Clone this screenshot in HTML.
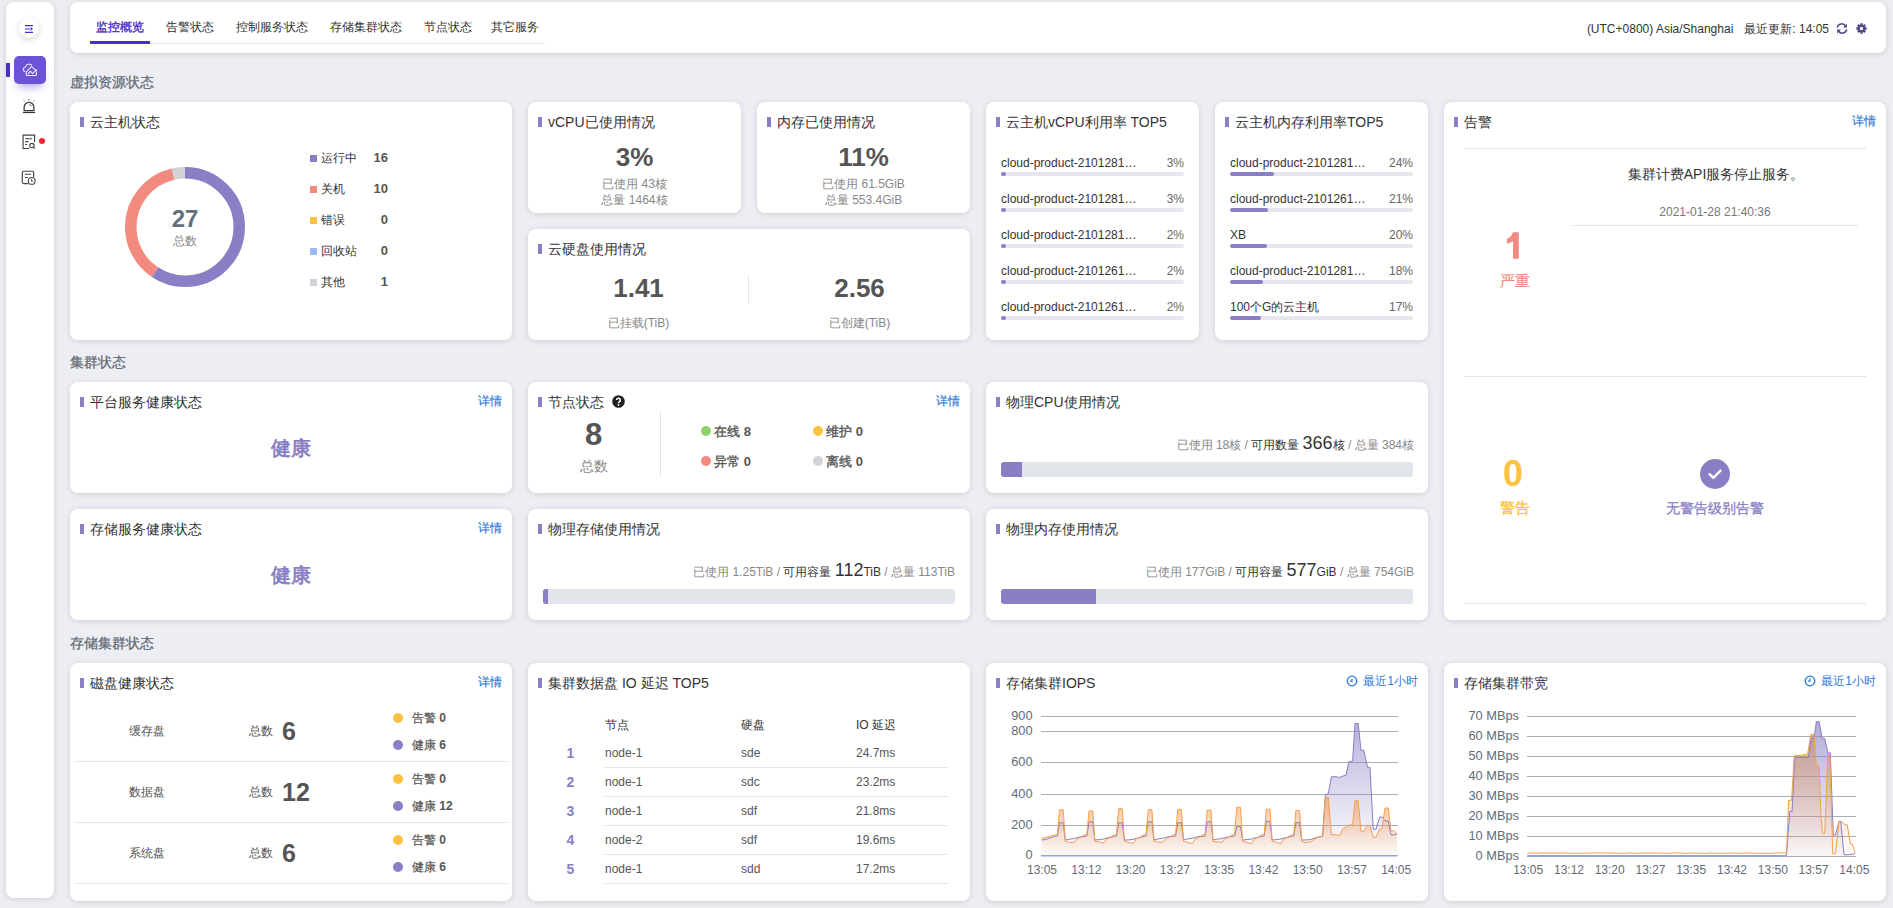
<!DOCTYPE html>
<html><head><meta charset="utf-8">
<style>
*{box-sizing:border-box;margin:0;padding:0}
html,body{width:1893px;height:908px;overflow:hidden}
body{background:#eceef3;font-family:"Liberation Sans",sans-serif;color:#333;position:relative}
.abs{position:absolute;white-space:nowrap}
.card{position:absolute;background:#fff;border-radius:8px;box-shadow:0 1px 6px rgba(0,0,0,0.13)}
.card>*{position:absolute;white-space:nowrap}
.ttl{left:20px;top:12px;font-size:14px;line-height:16px;color:#333}
.ttl:before{content:"";position:absolute;left:-10px;top:3px;width:4px;height:10px;background:#8a7fc4}
.sec{position:absolute;left:70px;font-size:14px;color:#5f6973;line-height:16px;-webkit-text-stroke:0.25px #5f6973}
.more{right:10px;top:12px;font-size:12px;color:#2d7bd8;line-height:14px;-webkit-text-stroke:0.2px #2d7bd8}
.tab{position:absolute;top:19px;font-size:12px;line-height:16px;color:#333;white-space:nowrap}
.c{transform:translateX(-50%);text-align:center}
.r{text-align:right}
.g{color:#888}
</style></head>
<body>
<div class="card" style="left:6px;top:2px;width:48px;height:896px"></div>
<div class="abs" style="left:19px;top:17.5px;width:20px;height:20px;border-radius:50%;background:#fff;box-shadow:0 2px 6px rgba(0,0,0,0.16)"></div>
<svg class="abs" style="left:19px;top:17.5px" width="20" height="20" viewBox="0 0 20 20"><path d="M6 7.6h8M6 14.4h8" stroke="#4b2ccc" stroke-width="1.4"/><path d="M6 11h5" stroke="#8a78dd" stroke-width="1.6"/><path d="M11.7 9.1l2.1 1.9-2.1 1.9z" fill="#4b2ccc"/></svg>
<div class="abs" style="left:14px;top:56px;width:32px;height:28px;border-radius:5px;background:#6d52d8;box-shadow:0 7px 9px -4px rgba(109,82,216,0.5)"></div>
<div class="abs" style="left:6px;top:63px;width:4px;height:14px;background:#4b2ccc"></div>
<svg class="abs" style="left:14px;top:56px" width="32" height="28" viewBox="0 0 32 28" fill="none" stroke="#fff" stroke-opacity="0.92" stroke-width="1.05" stroke-linecap="round" stroke-linejoin="round"><path d="M10.6 15.5C9.6 14.9 9.1 14 9.3 13.1C9.6 11.9 10.5 11.2 11.4 11.1C11.9 9.6 12.6 8.3 14 8.3H16.4C17 8.3 17.5 8.9 17.7 9.7"/><path d="M12.7 15.5L15.4 12.6C16.2 11.6 17 10.8 17.6 10.8C18.3 10.8 19 12 19.6 12.6L21.2 13.6"/><path d="M12.7 15.5C12.3 15.8 12.2 16.3 12.2 17V18.4C12.2 19 12.6 19.4 13.2 19.4H21.5C22.1 19.4 22.5 19 22.5 18.4V16.4"/><path d="M14.3 17.6L16.4 15.2L18.5 17.6L22 14.4"/><path d="M22.4 13.9l-1.6.2 1.3 1.2z" fill="#fff" stroke-width="0.6"/></svg>
<svg class="abs" style="left:22px;top:98px" width="14" height="16" viewBox="0 0 14 16" fill="none" stroke="#333" stroke-width="1.2"><path d="M2.1 12.6V9.2a4.9 4.9 0 0 1 9.8 0v3.4z"/><path d="M0.9 14.5h12.2" stroke-width="1.2"/><path d="M7 1.2v1.2M1.8 2.6l.8.9M12.2 2.6l-.8.9" stroke-width="1"/><path d="M7.6 6.6c.8.3 1.3.8 1.6 1.5" stroke-width="1"/></svg>
<svg class="abs" style="left:22px;top:134px" width="14" height="16" viewBox="0 0 14 16" fill="none" stroke="#444" stroke-width="1.15"><path d="M12.6 8.2V1.1H1.1v13.4h6.2"/><path d="M3.2 4.7h6.9M3.2 7.6h3.4M3.2 10.4h1.9" stroke-width="1.05"/><circle cx="9.9" cy="11.6" r="2.2" stroke-width="1.1"/><path d="M11.5 13.2l1.3 1.3" stroke-width="1.1"/></svg>
<div class="abs" style="left:39px;top:138px;width:6px;height:6px;border-radius:50%;background:#f5222d"></div>
<svg class="abs" style="left:21px;top:170px" width="16" height="16" viewBox="0 0 16 16" fill="none" stroke="#444" stroke-width="1.15"><path d="M7 13.6H2.8a1.5 1.5 0 0 1-1.5-1.5V2.7a1.5 1.5 0 0 1 1.5-1.5h8.4a1.5 1.5 0 0 1 1.5 1.5V7"/><path d="M3.8 4.3h6.2M3.8 7.4h3.1" stroke-width="1.05"/><circle cx="10.7" cy="10.9" r="3.4" fill="#fff" stroke-width="1.1"/><path d="M10.5 9.2v1.9h1.5" stroke-width="1"/></svg>
<div class="card" style="left:70px;top:2px;width:1816px;height:51px"></div>
<div class="abs" style="left:90px;top:43px;width:455px;height:1px;background:#e6e6ef"></div>
<div class="tab" style="left:96px;color:#4b2ccc;-webkit-text-stroke:0.35px #4b2ccc">监控概览</div>
<div class="abs" style="left:90px;top:41px;width:60px;height:3px;background:#4b2ccc"></div>
<div class="tab" style="left:166px">告警状态</div>
<div class="tab" style="left:236px">控制服务状态</div>
<div class="tab" style="left:330px">存储集群状态</div>
<div class="tab" style="left:424px">节点状态</div>
<div class="tab" style="left:491px">其它服务</div>
<div class="abs" style="right:64px;top:21px;font-size:12px;line-height:16px;color:#333">(UTC+0800) Asia/Shanghai<span style="margin-left:11px">最近更新: 14:05</span></div>
<svg class="abs" style="left:1836px;top:23px" width="12" height="11" viewBox="0 0 12 11" fill="none" stroke="#524a86" stroke-width="1.5"><path d="M1.2 4.6A4.6 4.6 0 0 1 9.6 3"/><path d="M10.8 6.4A4.6 4.6 0 0 1 2.4 8"/><path d="M10.9 0.6v3.9H7z" fill="#524a86" stroke="none"/><path d="M1.1 10.4V6.5H5z" fill="#524a86" stroke="none"/></svg>
<svg class="abs" style="left:1855.5px;top:23px" width="11" height="11" viewBox="0 0 24 24"><path fill="#524a86" fill-rule="evenodd" d="M8.71,4.05 L9.49,3.78 L9.39,0.70 L14.61,0.70 L14.51,3.78 L15.29,4.05 L16.04,4.41 L18.15,2.16 L21.84,5.85 L19.59,7.96 L19.95,8.71 L20.22,9.49 L23.30,9.39 L23.30,14.61 L20.22,14.51 L19.95,15.29 L19.59,16.04 L21.84,18.15 L18.15,21.84 L16.04,19.59 L15.29,19.95 L14.51,20.22 L14.61,23.30 L9.39,23.30 L9.49,20.22 L8.71,19.95 L7.96,19.59 L5.85,21.84 L2.16,18.15 L4.41,16.04 L4.05,15.29 L3.78,14.51 L0.70,14.61 L0.70,9.39 L3.78,9.49 L4.05,8.71 L4.41,7.96 L2.16,5.85 L5.85,2.16 L7.96,4.41 Z M12,8.4 A3.6,3.6 0 1,0 12,15.6 A3.6,3.6 0 1,0 12,8.4 Z"/></svg>
<div class="sec" style="top:74px">虚拟资源状态</div>
<div class="sec" style="top:354px">集群状态</div>
<div class="sec" style="top:635px">存储集群状态</div>
<div class="card" style="left:70px;top:102px;width:442px;height:238px"><div class="ttl">云主机状态</div><svg style="left:0;top:0" width="240" height="238"><circle cx="115" cy="125" r="54.25" fill="none" stroke="#8a7fc4" stroke-width="11.5" stroke-dasharray="201.993 138.870" stroke-dashoffset="0.000" transform="rotate(-90 115 125)"/><circle cx="115" cy="125" r="54.25" fill="none" stroke="#f28a80" stroke-width="11.5" stroke-dasharray="126.245 214.617" stroke-dashoffset="-201.993" transform="rotate(-90 115 125)"/><circle cx="115" cy="125" r="54.25" fill="none" stroke="#d2d2d8" stroke-width="11.5" stroke-dasharray="12.625 328.238" stroke-dashoffset="-328.238" transform="rotate(-90 115 125)"/></svg><div class="c" style="left:115px;top:103px;font-size:24px;line-height:28px;font-weight:bold;color:#62707b">27</div><div class="c g" style="left:115px;top:132px;font-size:12px;line-height:14px">总数</div><div style="left:240px;top:52.5px;width:7px;height:7px;background:#8a7fc4"></div><div style="left:251px;top:47.5px;font-size:12px;line-height:16px;color:#333">运行中</div><div class="r" style="left:278px;width:40px;top:46.5px;font-size:13px;line-height:18px;font-weight:bold;color:#555">16</div><div style="left:240px;top:83.5px;width:7px;height:7px;background:#f28a80"></div><div style="left:251px;top:78.5px;font-size:12px;line-height:16px;color:#333">关机</div><div class="r" style="left:278px;width:40px;top:77.5px;font-size:13px;line-height:18px;font-weight:bold;color:#555">10</div><div style="left:240px;top:114.5px;width:7px;height:7px;background:#fcc23f"></div><div style="left:251px;top:109.5px;font-size:12px;line-height:16px;color:#333">错误</div><div class="r" style="left:278px;width:40px;top:108.5px;font-size:13px;line-height:18px;font-weight:bold;color:#555">0</div><div style="left:240px;top:145.5px;width:7px;height:7px;background:#9db8f5"></div><div style="left:251px;top:140.5px;font-size:12px;line-height:16px;color:#333">回收站</div><div class="r" style="left:278px;width:40px;top:139.5px;font-size:13px;line-height:18px;font-weight:bold;color:#555">0</div><div style="left:240px;top:176.5px;width:7px;height:7px;background:#d2d2d8"></div><div style="left:251px;top:171.5px;font-size:12px;line-height:16px;color:#333">其他</div><div class="r" style="left:278px;width:40px;top:170.5px;font-size:13px;line-height:18px;font-weight:bold;color:#555">1</div></div>
<div class="card" style="left:528px;top:102px;width:213px;height:111px"><div class="ttl">vCPU已使用情况</div><div class="c" style="left:106.5px;top:40px;font-size:26px;line-height:30px;font-weight:bold;color:#555">3%</div><div class="c g" style="left:106.5px;top:74px;font-size:12px;line-height:16px">已使用 43核</div><div class="c g" style="left:106.5px;top:90px;font-size:12px;line-height:16px">总量 1464核</div></div>
<div class="card" style="left:757px;top:102px;width:213px;height:111px"><div class="ttl">内存已使用情况</div><div class="c" style="left:106.5px;top:40px;font-size:26px;line-height:30px;font-weight:bold;color:#555">11%</div><div class="c g" style="left:106.5px;top:74px;font-size:12px;line-height:16px">已使用 61.5GiB</div><div class="c g" style="left:106.5px;top:90px;font-size:12px;line-height:16px">总量 553.4GiB</div></div>
<div class="card" style="left:528px;top:229px;width:442px;height:111px"><div class="ttl">云硬盘使用情况</div><div class="c" style="left:110.5px;top:44px;font-size:26px;line-height:30px;font-weight:bold;color:#555">1.41</div><div class="c g" style="left:110.5px;top:86px;font-size:12px;line-height:16px">已挂载(TiB)</div><div class="c" style="left:331.5px;top:44px;font-size:26px;line-height:30px;font-weight:bold;color:#555">2.56</div><div class="c g" style="left:331.5px;top:86px;font-size:12px;line-height:16px">已创建(TiB)</div><div style="left:220px;top:46px;width:1px;height:29px;background:#e8e8e8"></div></div>
<div class="card" style="left:986px;top:102px;width:213px;height:238px"><div class="ttl">云主机vCPU利用率 TOP5</div><div style="left:15px;top:53px;font-size:12px;line-height:16px;color:#333">cloud-product-2101281…</div><div class="r" style="right:15px;top:53px;font-size:12px;line-height:16px;color:#666">3%</div><div style="left:15px;top:70px;width:183px;height:4px;border-radius:2px;background:#e4e7eb"></div><div style="left:15px;top:70px;width:5px;height:4px;border-radius:2px;background:#8a7fc4"></div><div style="left:15px;top:89px;font-size:12px;line-height:16px;color:#333">cloud-product-2101281…</div><div class="r" style="right:15px;top:89px;font-size:12px;line-height:16px;color:#666">3%</div><div style="left:15px;top:106px;width:183px;height:4px;border-radius:2px;background:#e4e7eb"></div><div style="left:15px;top:106px;width:5px;height:4px;border-radius:2px;background:#8a7fc4"></div><div style="left:15px;top:125px;font-size:12px;line-height:16px;color:#333">cloud-product-2101281…</div><div class="r" style="right:15px;top:125px;font-size:12px;line-height:16px;color:#666">2%</div><div style="left:15px;top:142px;width:183px;height:4px;border-radius:2px;background:#e4e7eb"></div><div style="left:15px;top:142px;width:5px;height:4px;border-radius:2px;background:#8a7fc4"></div><div style="left:15px;top:161px;font-size:12px;line-height:16px;color:#333">cloud-product-2101261…</div><div class="r" style="right:15px;top:161px;font-size:12px;line-height:16px;color:#666">2%</div><div style="left:15px;top:178px;width:183px;height:4px;border-radius:2px;background:#e4e7eb"></div><div style="left:15px;top:178px;width:5px;height:4px;border-radius:2px;background:#8a7fc4"></div><div style="left:15px;top:197px;font-size:12px;line-height:16px;color:#333">cloud-product-2101261…</div><div class="r" style="right:15px;top:197px;font-size:12px;line-height:16px;color:#666">2%</div><div style="left:15px;top:214px;width:183px;height:4px;border-radius:2px;background:#e4e7eb"></div><div style="left:15px;top:214px;width:5px;height:4px;border-radius:2px;background:#8a7fc4"></div></div>
<div class="card" style="left:1215px;top:102px;width:213px;height:238px"><div class="ttl">云主机内存利用率TOP5</div><div style="left:15px;top:53px;font-size:12px;line-height:16px;color:#333">cloud-product-2101281…</div><div class="r" style="right:15px;top:53px;font-size:12px;line-height:16px;color:#666">24%</div><div style="left:15px;top:70px;width:183px;height:4px;border-radius:2px;background:#e4e7eb"></div><div style="left:15px;top:70px;width:44px;height:4px;border-radius:2px;background:#8a7fc4"></div><div style="left:15px;top:89px;font-size:12px;line-height:16px;color:#333">cloud-product-2101261…</div><div class="r" style="right:15px;top:89px;font-size:12px;line-height:16px;color:#666">21%</div><div style="left:15px;top:106px;width:183px;height:4px;border-radius:2px;background:#e4e7eb"></div><div style="left:15px;top:106px;width:38px;height:4px;border-radius:2px;background:#8a7fc4"></div><div style="left:15px;top:125px;font-size:12px;line-height:16px;color:#333">XB</div><div class="r" style="right:15px;top:125px;font-size:12px;line-height:16px;color:#666">20%</div><div style="left:15px;top:142px;width:183px;height:4px;border-radius:2px;background:#e4e7eb"></div><div style="left:15px;top:142px;width:37px;height:4px;border-radius:2px;background:#8a7fc4"></div><div style="left:15px;top:161px;font-size:12px;line-height:16px;color:#333">cloud-product-2101281…</div><div class="r" style="right:15px;top:161px;font-size:12px;line-height:16px;color:#666">18%</div><div style="left:15px;top:178px;width:183px;height:4px;border-radius:2px;background:#e4e7eb"></div><div style="left:15px;top:178px;width:33px;height:4px;border-radius:2px;background:#8a7fc4"></div><div style="left:15px;top:197px;font-size:12px;line-height:16px;color:#333">100个G的云主机</div><div class="r" style="right:15px;top:197px;font-size:12px;line-height:16px;color:#666">17%</div><div style="left:15px;top:214px;width:183px;height:4px;border-radius:2px;background:#e4e7eb"></div><div style="left:15px;top:214px;width:31px;height:4px;border-radius:2px;background:#8a7fc4"></div></div>
<div class="card" style="left:1444px;top:102px;width:442px;height:518px"><div class="ttl">告警</div><div class="more">详情</div><div style="left:20px;top:46px;width:402px;height:1px;background:#e3e3e3"></div><div class="c" style="left:272px;top:64px;font-size:14px;line-height:16px;color:#333">集群计费API服务停止服务。</div><div class="c" style="left:271px;top:102px;font-size:12px;line-height:16px;color:#777">2021-01-28 21:40:36</div><div style="left:129px;top:123px;width:285px;height:1px;background:#e3e3e3"></div><svg style="left:0;top:0" width="100" height="170"><path fill="#f28a80" d="M69 130.3H74.8V156.8H69V139.3C67.2 140.4 65 141.3 62.9 141.8V136.8C65.8 135.8 68.2 133.6 69 130.3Z"/></svg><div class="c" style="left:70.5px;top:170px;font-size:15px;line-height:18px;color:#f28a80;-webkit-text-stroke:0.2px #f28a80">严重</div><div style="left:20px;top:274px;width:402px;height:1px;background:#e3e3e3"></div><div class="c" style="left:69px;top:352px;font-size:36px;line-height:40px;font-weight:bold;color:#fcc23f">0</div><div class="c" style="left:70.5px;top:397px;font-size:15px;line-height:18px;color:#fcc23f;-webkit-text-stroke:0.3px #fcc23f">警告</div><svg style="left:256px;top:357px" width="30" height="30" viewBox="0 0 30 30"><circle cx="15" cy="15" r="15" fill="#8a7fc4"/><path d="M9.5 15.2l3.8 3.6 7.2-7.2" fill="none" stroke="#fff" stroke-width="2.4" stroke-linecap="round" stroke-linejoin="round"/></svg><div class="c" style="left:271px;top:398px;font-size:14px;line-height:16px;color:#8a7fc4;-webkit-text-stroke:0.3px #8a7fc4">无警告级别告警</div><div style="left:20px;top:501px;width:402px;height:1px;background:#e3e3e3"></div></div>
<div class="card" style="left:70px;top:382px;width:442px;height:111px"><div class="ttl">平台服务健康状态</div><div class="more">详情</div><div class="c" style="left:221px;top:54px;font-size:20px;line-height:24px;font-weight:bold;color:#8a7fc4">健康</div></div>
<div class="card" style="left:70px;top:509px;width:442px;height:111px"><div class="ttl">存储服务健康状态</div><div class="more">详情</div><div class="c" style="left:221px;top:54px;font-size:20px;line-height:24px;font-weight:bold;color:#8a7fc4">健康</div></div>
<div class="card" style="left:528px;top:382px;width:442px;height:111px"><div class="ttl">节点状态</div><div class="more">详情</div><svg style="left:84px;top:13px" width="13" height="13" viewBox="0 0 13 13"><circle cx="6.5" cy="6.5" r="6.3" fill="#222"/><path d="M4.6 5.1a1.9 1.9 0 1 1 2.6 1.8c-.5.2-.7.5-.7 1v.4" fill="none" stroke="#fff" stroke-width="1.5"/><circle cx="6.5" cy="10" r=".9" fill="#fff"/></svg><div class="c" style="left:65.5px;top:37px;font-size:31px;line-height:32px;font-weight:bold;color:#555">8</div><div class="c g" style="left:65.5px;top:76px;font-size:14px;line-height:16px">总数</div><div style="left:132px;top:30px;width:1px;height:65px;background:#e3e3e3"></div><div style="left:173px;top:44px;width:10px;height:10px;border-radius:50%;background:#8fd16a"></div><div style="left:186px;top:42px;font-size:13px;line-height:16px;color:#555"><span style="-webkit-text-stroke:0.35px #555">在线</span> <b>8</b></div><div style="left:285px;top:44px;width:10px;height:10px;border-radius:50%;background:#fcc23f"></div><div style="left:298px;top:42px;font-size:13px;line-height:16px;color:#555"><span style="-webkit-text-stroke:0.35px #555">维护</span> <b>0</b></div><div style="left:173px;top:74px;width:10px;height:10px;border-radius:50%;background:#f28a80"></div><div style="left:186px;top:72px;font-size:13px;line-height:16px;color:#555"><span style="-webkit-text-stroke:0.35px #555">异常</span> <b>0</b></div><div style="left:285px;top:74px;width:10px;height:10px;border-radius:50%;background:#d2d2d8"></div><div style="left:298px;top:72px;font-size:13px;line-height:16px;color:#555"><span style="-webkit-text-stroke:0.35px #555">离线</span> <b>0</b></div></div>
<div class="card" style="left:986px;top:382px;width:442px;height:111px"><div class="ttl">物理CPU使用情况</div><div class="r" style="right:14px;top:49px;font-size:12px;line-height:24px;color:#888">已使用 18核 / <span style="color:#333">可用数量 <span style="font-size:18px">366</span>核</span> / 总量 384核</div><div style="left:15px;top:80px;width:412px;height:15px;border-radius:3px;background:#e2e5e9;overflow:hidden"><div style="position:absolute;left:0;top:0;height:15px;width:21px;background:#8a7fc4"></div></div></div>
<div class="card" style="left:528px;top:509px;width:442px;height:111px"><div class="ttl">物理存储使用情况</div><div class="r" style="right:15px;top:49px;font-size:12px;line-height:24px;color:#888">已使用 1.25TiB / <span style="color:#333">可用容量 <span style="font-size:18px">112</span>TiB</span> / 总量 113TiB</div><div style="left:15px;top:80px;width:412px;height:15px;border-radius:3px;background:#e2e5e9;overflow:hidden"><div style="position:absolute;left:0;top:0;height:15px;width:5px;background:#8a7fc4"></div></div></div>
<div class="card" style="left:986px;top:509px;width:442px;height:111px"><div class="ttl">物理内存使用情况</div><div class="r" style="right:14px;top:49px;font-size:12px;line-height:24px;color:#888">已使用 177GiB / <span style="color:#333">可用容量 <span style="font-size:18px">577</span>GiB</span> / 总量 754GiB</div><div style="left:15px;top:80px;width:412px;height:15px;border-radius:3px;background:#e2e5e9;overflow:hidden"><div style="position:absolute;left:0;top:0;height:15px;width:95px;background:#8a7fc4"></div></div></div>
<div class="card" style="left:70px;top:663px;width:442px;height:238px"><div class="ttl">磁盘健康状态</div><div class="more">详情</div><div class="c" style="left:77px;top:60px;font-size:12px;line-height:16px;color:#555">缓存盘</div><div style="left:179px;top:60px;font-size:12px;line-height:16px;color:#555">总数</div><div style="left:212px;top:53px;font-size:25px;line-height:30px;font-weight:bold;color:#555">6</div><div style="left:323px;top:50px;width:10px;height:10px;border-radius:50%;background:#fcc23f"></div><div style="left:342px;top:47px;font-size:12px;line-height:16px;color:#555"><span style="-webkit-text-stroke:0.2px #555">告警</span> <b>0</b></div><div style="left:323px;top:77px;width:10px;height:10px;border-radius:50%;background:#8a7fc4"></div><div style="left:342px;top:74px;font-size:12px;line-height:16px;color:#555"><span style="-webkit-text-stroke:0.2px #555">健康</span> <b>6</b></div><div style="left:5px;top:98px;width:432px;height:1px;background:#e3e3e3"></div><div class="c" style="left:77px;top:121px;font-size:12px;line-height:16px;color:#555">数据盘</div><div style="left:179px;top:121px;font-size:12px;line-height:16px;color:#555">总数</div><div style="left:212px;top:114px;font-size:25px;line-height:30px;font-weight:bold;color:#555">12</div><div style="left:323px;top:111px;width:10px;height:10px;border-radius:50%;background:#fcc23f"></div><div style="left:342px;top:108px;font-size:12px;line-height:16px;color:#555"><span style="-webkit-text-stroke:0.2px #555">告警</span> <b>0</b></div><div style="left:323px;top:138px;width:10px;height:10px;border-radius:50%;background:#8a7fc4"></div><div style="left:342px;top:135px;font-size:12px;line-height:16px;color:#555"><span style="-webkit-text-stroke:0.2px #555">健康</span> <b>12</b></div><div style="left:5px;top:159px;width:432px;height:1px;background:#e3e3e3"></div><div class="c" style="left:77px;top:182px;font-size:12px;line-height:16px;color:#555">系统盘</div><div style="left:179px;top:182px;font-size:12px;line-height:16px;color:#555">总数</div><div style="left:212px;top:175px;font-size:25px;line-height:30px;font-weight:bold;color:#555">6</div><div style="left:323px;top:172px;width:10px;height:10px;border-radius:50%;background:#fcc23f"></div><div style="left:342px;top:169px;font-size:12px;line-height:16px;color:#555"><span style="-webkit-text-stroke:0.2px #555">告警</span> <b>0</b></div><div style="left:323px;top:199px;width:10px;height:10px;border-radius:50%;background:#8a7fc4"></div><div style="left:342px;top:196px;font-size:12px;line-height:16px;color:#555"><span style="-webkit-text-stroke:0.2px #555">健康</span> <b>6</b></div><div style="left:5px;top:220px;width:432px;height:1px;background:#e3e3e3"></div></div>
<div class="card" style="left:528px;top:663px;width:442px;height:238px"><div class="ttl">集群数据盘 IO 延迟 TOP5</div><div style="left:77px;top:54px;font-size:12px;line-height:16px;color:#333">节点</div><div style="left:213px;top:54px;font-size:12px;line-height:16px;color:#333">硬盘</div><div style="left:328px;top:54px;font-size:12px;line-height:16px;color:#333">IO 延迟</div><div class="c" style="left:42.5px;top:81px;font-size:14px;line-height:18px;font-weight:bold;color:#8a7fc4">1</div><div style="left:77px;top:82px;font-size:12px;line-height:16px;color:#555">node-1</div><div style="left:213px;top:82px;font-size:12px;line-height:16px;color:#555">sde</div><div style="left:328px;top:82px;font-size:12px;line-height:16px;color:#555">24.7ms</div><div style="left:77px;top:104px;width:343px;height:1px;background:#e3e3e3"></div><div class="c" style="left:42.5px;top:110px;font-size:14px;line-height:18px;font-weight:bold;color:#8a7fc4">2</div><div style="left:77px;top:111px;font-size:12px;line-height:16px;color:#555">node-1</div><div style="left:213px;top:111px;font-size:12px;line-height:16px;color:#555">sdc</div><div style="left:328px;top:111px;font-size:12px;line-height:16px;color:#555">23.2ms</div><div style="left:77px;top:133px;width:343px;height:1px;background:#e3e3e3"></div><div class="c" style="left:42.5px;top:139px;font-size:14px;line-height:18px;font-weight:bold;color:#8a7fc4">3</div><div style="left:77px;top:140px;font-size:12px;line-height:16px;color:#555">node-1</div><div style="left:213px;top:140px;font-size:12px;line-height:16px;color:#555">sdf</div><div style="left:328px;top:140px;font-size:12px;line-height:16px;color:#555">21.8ms</div><div style="left:77px;top:162px;width:343px;height:1px;background:#e3e3e3"></div><div class="c" style="left:42.5px;top:168px;font-size:14px;line-height:18px;font-weight:bold;color:#8a7fc4">4</div><div style="left:77px;top:169px;font-size:12px;line-height:16px;color:#555">node-2</div><div style="left:213px;top:169px;font-size:12px;line-height:16px;color:#555">sdf</div><div style="left:328px;top:169px;font-size:12px;line-height:16px;color:#555">19.6ms</div><div style="left:77px;top:191px;width:343px;height:1px;background:#e3e3e3"></div><div class="c" style="left:42.5px;top:197px;font-size:14px;line-height:18px;font-weight:bold;color:#8a7fc4">5</div><div style="left:77px;top:198px;font-size:12px;line-height:16px;color:#555">node-1</div><div style="left:213px;top:198px;font-size:12px;line-height:16px;color:#555">sdd</div><div style="left:328px;top:198px;font-size:12px;line-height:16px;color:#555">17.2ms</div><div style="left:77px;top:220px;width:343px;height:1px;background:#e3e3e3"></div></div>
<div class="card" style="left:986px;top:663px;width:442px;height:238px"><div class="ttl">存储集群IOPS</div><svg style="left:0;top:0" width="442" height="238" viewBox="986 663 442 238" font-family="Liberation Sans, sans-serif" font-size="12"><defs><linearGradient id="gp1" x1="0" y1="0" x2="0" y2="1"><stop offset="0" stop-color="#8a7fc4" stop-opacity="0.6"/><stop offset="1" stop-color="#8a7fc4" stop-opacity="0"/></linearGradient><linearGradient id="go1" x1="0" y1="0" x2="0" y2="1"><stop offset="0" stop-color="#f79a50" stop-opacity="0.62"/><stop offset="1" stop-color="#f79a50" stop-opacity="0.03"/></linearGradient></defs><line x1="1041" x2="1398" y1="855.5" y2="855.5" stroke="#a9afb9" stroke-width="1"/><text x="1032.6" y="858.8" text-anchor="end" fill="#636b75" font-size="12.8">0</text><line x1="1041" x2="1398" y1="825.5" y2="825.5" stroke="#a9afb9" stroke-width="1"/><text x="1032.6" y="828.8" text-anchor="end" fill="#636b75" font-size="12.8">200</text><line x1="1041" x2="1398" y1="794.5" y2="794.5" stroke="#a9afb9" stroke-width="1"/><text x="1032.6" y="797.8" text-anchor="end" fill="#636b75" font-size="12.8">400</text><line x1="1041" x2="1398" y1="762.5" y2="762.5" stroke="#a9afb9" stroke-width="1"/><text x="1032.6" y="765.8" text-anchor="end" fill="#636b75" font-size="12.8">600</text><line x1="1041" x2="1398" y1="731.5" y2="731.5" stroke="#a9afb9" stroke-width="1"/><text x="1032.6" y="734.8" text-anchor="end" fill="#636b75" font-size="12.8">800</text><line x1="1041" x2="1398" y1="716.5" y2="716.5" stroke="#a9afb9" stroke-width="1"/><text x="1032.6" y="719.8" text-anchor="end" fill="#636b75" font-size="12.8">900</text><text x="1042.0" y="873.8" text-anchor="middle" fill="#636b75">13:05</text><text x="1086.3" y="873.8" text-anchor="middle" fill="#636b75">13:12</text><text x="1130.5" y="873.8" text-anchor="middle" fill="#636b75">13:20</text><text x="1174.8" y="873.8" text-anchor="middle" fill="#636b75">13:27</text><text x="1219.1" y="873.8" text-anchor="middle" fill="#636b75">13:35</text><text x="1263.4" y="873.8" text-anchor="middle" fill="#636b75">13:42</text><text x="1307.7" y="873.8" text-anchor="middle" fill="#636b75">13:50</text><text x="1351.9" y="873.8" text-anchor="middle" fill="#636b75">13:57</text><text x="1396.2" y="873.8" text-anchor="middle" fill="#636b75">14:05</text><path d="M1041.5,855.7 L1041.5,840.0 L1045.0,839.6 L1054.3,836.5 L1057.0,836.0 L1057.4,835.9 L1059.5,822.7 L1063.2,822.7 L1065.3,840.0 L1069.8,839.1 L1074.3,838.5 L1077.1,837.6 L1080.8,836.8 L1083.8,836.5 L1086.5,836.0 L1086.9,835.9 L1089.0,821.8 L1092.8,821.8 L1094.8,840.0 L1099.4,839.6 L1103.9,839.0 L1106.7,838.0 L1110.4,837.3 L1113.4,836.5 L1116.1,836.0 L1116.5,835.9 L1118.6,822.7 L1122.3,822.7 L1124.4,840.0 L1129.0,839.9 L1133.5,839.3 L1136.2,838.3 L1140.0,837.6 L1143.0,836.5 L1145.7,836.0 L1146.0,835.9 L1148.2,821.8 L1151.9,821.8 L1154.0,840.0 L1158.5,838.8 L1163.0,838.2 L1165.8,837.3 L1169.5,836.5 L1172.5,836.5 L1175.2,836.0 L1175.6,835.9 L1177.7,822.7 L1181.4,822.7 L1183.5,840.0 L1188.0,838.8 L1192.5,838.2 L1195.3,837.3 L1199.0,836.5 L1202.0,836.5 L1204.8,836.0 L1205.1,835.9 L1207.2,821.8 L1211.0,821.8 L1213.0,840.0 L1217.6,839.1 L1222.1,838.5 L1224.9,837.6 L1228.6,836.8 L1231.6,836.5 L1234.3,836.0 L1234.7,835.9 L1236.8,826.4 L1240.5,826.4 L1242.6,840.0 L1247.1,839.6 L1251.6,839.0 L1254.4,838.0 L1258.1,837.3 L1261.1,836.5 L1263.8,836.0 L1264.2,835.9 L1266.3,821.3 L1270.0,821.3 L1272.1,840.0 L1276.7,839.6 L1281.2,839.0 L1284.0,838.0 L1287.7,837.3 L1290.7,836.5 L1293.4,836.0 L1293.8,835.9 L1295.9,822.7 L1299.6,822.7 L1301.7,840.0 L1304.0,840.0 L1310.0,839.7 L1314.0,838.3 L1318.0,837.1 L1322.6,836.3 L1325.4,794.8 L1328.3,793.7 L1331.4,776.7 L1335.7,776.7 L1339.5,777.4 L1343.2,775.9 L1346.0,775.4 L1348.8,761.8 L1352.6,761.2 L1355.0,723.5 L1358.2,723.5 L1361.0,750.3 L1363.8,750.3 L1367.6,767.4 L1370.0,767.4 L1373.2,829.2 L1376.0,829.2 L1379.7,817.0 L1382.0,817.0 L1385.0,820.7 L1388.2,821.0 L1391.0,834.8 L1394.7,834.8 L1397.0,833.7 L1397.0,855.7 Z" fill="url(#gp1)"/><path d="M1041.5,855.7 L1041.5,838.2 L1045.0,837.7 L1054.3,835.2 L1057.0,834.6 L1057.4,834.3 L1059.5,809.7 L1063.2,809.7 L1065.3,841.3 L1069.8,842.5 L1074.3,842.4 L1077.1,838.7 L1080.8,837.4 L1083.8,835.2 L1086.5,834.6 L1086.9,834.3 L1089.0,810.9 L1092.8,810.9 L1094.8,841.3 L1099.4,841.9 L1103.9,843.1 L1106.7,838.7 L1110.4,837.4 L1113.4,835.2 L1116.1,834.6 L1116.5,834.3 L1118.6,808.6 L1122.3,808.6 L1124.4,841.3 L1129.0,842.7 L1133.5,843.5 L1136.2,838.7 L1140.0,837.4 L1143.0,835.2 L1145.7,834.6 L1146.0,834.3 L1148.2,809.7 L1151.9,809.7 L1154.0,841.3 L1158.5,842.2 L1163.0,842.2 L1165.8,838.7 L1169.5,837.4 L1172.5,835.2 L1175.2,834.6 L1175.6,834.3 L1177.7,809.4 L1181.4,809.4 L1183.5,841.3 L1188.0,842.5 L1192.5,843.6 L1195.3,838.7 L1199.0,837.4 L1202.0,835.2 L1204.8,834.6 L1205.1,834.3 L1207.2,810.0 L1211.0,810.0 L1213.0,841.3 L1217.6,841.9 L1222.1,842.2 L1224.9,838.7 L1228.6,837.4 L1231.6,835.2 L1234.3,834.6 L1234.7,834.3 L1236.8,807.3 L1240.5,807.3 L1242.6,841.3 L1247.1,842.5 L1251.6,843.8 L1254.4,838.7 L1258.1,837.4 L1261.1,835.2 L1263.8,834.6 L1264.2,834.3 L1266.3,809.2 L1270.0,809.2 L1272.1,841.3 L1276.7,842.5 L1281.2,843.5 L1284.0,838.7 L1287.7,837.4 L1290.7,835.2 L1293.4,834.6 L1293.8,834.3 L1295.9,810.4 L1299.6,810.4 L1301.7,841.3 L1304.0,842.4 L1310.0,842.1 L1314.0,839.4 L1318.0,837.4 L1322.6,835.6 L1325.4,797.3 L1328.3,797.3 L1331.4,834.5 L1335.7,834.8 L1339.5,835.6 L1343.2,828.3 L1346.0,827.8 L1348.8,825.2 L1352.6,824.7 L1355.0,800.7 L1358.2,800.7 L1361.0,831.1 L1363.8,831.1 L1367.6,825.3 L1370.0,825.8 L1373.2,837.3 L1376.0,837.3 L1379.7,829.0 L1382.0,828.4 L1385.0,808.0 L1388.2,808.0 L1391.0,830.6 L1394.7,831.2 L1397.0,834.8 L1397.0,855.7 Z" fill="url(#go1)"/><polyline points="1041.5,840.0 1045.0,839.6 1054.3,836.5 1057.0,836.0 1057.4,835.9 1059.5,822.7 1063.2,822.7 1065.3,840.0 1069.8,839.1 1074.3,838.5 1077.1,837.6 1080.8,836.8 1083.8,836.5 1086.5,836.0 1086.9,835.9 1089.0,821.8 1092.8,821.8 1094.8,840.0 1099.4,839.6 1103.9,839.0 1106.7,838.0 1110.4,837.3 1113.4,836.5 1116.1,836.0 1116.5,835.9 1118.6,822.7 1122.3,822.7 1124.4,840.0 1129.0,839.9 1133.5,839.3 1136.2,838.3 1140.0,837.6 1143.0,836.5 1145.7,836.0 1146.0,835.9 1148.2,821.8 1151.9,821.8 1154.0,840.0 1158.5,838.8 1163.0,838.2 1165.8,837.3 1169.5,836.5 1172.5,836.5 1175.2,836.0 1175.6,835.9 1177.7,822.7 1181.4,822.7 1183.5,840.0 1188.0,838.8 1192.5,838.2 1195.3,837.3 1199.0,836.5 1202.0,836.5 1204.8,836.0 1205.1,835.9 1207.2,821.8 1211.0,821.8 1213.0,840.0 1217.6,839.1 1222.1,838.5 1224.9,837.6 1228.6,836.8 1231.6,836.5 1234.3,836.0 1234.7,835.9 1236.8,826.4 1240.5,826.4 1242.6,840.0 1247.1,839.6 1251.6,839.0 1254.4,838.0 1258.1,837.3 1261.1,836.5 1263.8,836.0 1264.2,835.9 1266.3,821.3 1270.0,821.3 1272.1,840.0 1276.7,839.6 1281.2,839.0 1284.0,838.0 1287.7,837.3 1290.7,836.5 1293.4,836.0 1293.8,835.9 1295.9,822.7 1299.6,822.7 1301.7,840.0 1304.0,840.0 1310.0,839.7 1314.0,838.3 1318.0,837.1 1322.6,836.3 1325.4,794.8 1328.3,793.7 1331.4,776.7 1335.7,776.7 1339.5,777.4 1343.2,775.9 1346.0,775.4 1348.8,761.8 1352.6,761.2 1355.0,723.5 1358.2,723.5 1361.0,750.3 1363.8,750.3 1367.6,767.4 1370.0,767.4 1373.2,829.2 1376.0,829.2 1379.7,817.0 1382.0,817.0 1385.0,820.7 1388.2,821.0 1391.0,834.8 1394.7,834.8 1397.0,833.7" fill="none" stroke="#8a7fc4" stroke-width="1"/><polyline points="1041.5,838.2 1045.0,837.7 1054.3,835.2 1057.0,834.6 1057.4,834.3 1059.5,809.7 1063.2,809.7 1065.3,841.3 1069.8,842.5 1074.3,842.4 1077.1,838.7 1080.8,837.4 1083.8,835.2 1086.5,834.6 1086.9,834.3 1089.0,810.9 1092.8,810.9 1094.8,841.3 1099.4,841.9 1103.9,843.1 1106.7,838.7 1110.4,837.4 1113.4,835.2 1116.1,834.6 1116.5,834.3 1118.6,808.6 1122.3,808.6 1124.4,841.3 1129.0,842.7 1133.5,843.5 1136.2,838.7 1140.0,837.4 1143.0,835.2 1145.7,834.6 1146.0,834.3 1148.2,809.7 1151.9,809.7 1154.0,841.3 1158.5,842.2 1163.0,842.2 1165.8,838.7 1169.5,837.4 1172.5,835.2 1175.2,834.6 1175.6,834.3 1177.7,809.4 1181.4,809.4 1183.5,841.3 1188.0,842.5 1192.5,843.6 1195.3,838.7 1199.0,837.4 1202.0,835.2 1204.8,834.6 1205.1,834.3 1207.2,810.0 1211.0,810.0 1213.0,841.3 1217.6,841.9 1222.1,842.2 1224.9,838.7 1228.6,837.4 1231.6,835.2 1234.3,834.6 1234.7,834.3 1236.8,807.3 1240.5,807.3 1242.6,841.3 1247.1,842.5 1251.6,843.8 1254.4,838.7 1258.1,837.4 1261.1,835.2 1263.8,834.6 1264.2,834.3 1266.3,809.2 1270.0,809.2 1272.1,841.3 1276.7,842.5 1281.2,843.5 1284.0,838.7 1287.7,837.4 1290.7,835.2 1293.4,834.6 1293.8,834.3 1295.9,810.4 1299.6,810.4 1301.7,841.3 1304.0,842.4 1310.0,842.1 1314.0,839.4 1318.0,837.4 1322.6,835.6 1325.4,797.3 1328.3,797.3 1331.4,834.5 1335.7,834.8 1339.5,835.6 1343.2,828.3 1346.0,827.8 1348.8,825.2 1352.6,824.7 1355.0,800.7 1358.2,800.7 1361.0,831.1 1363.8,831.1 1367.6,825.3 1370.0,825.8 1373.2,837.3 1376.0,837.3 1379.7,829.0 1382.0,828.4 1385.0,808.0 1388.2,808.0 1391.0,830.6 1394.7,831.2 1397.0,834.8" fill="none" stroke="#f5a04d" stroke-width="1"/><line x1="1041" x2="1397" y1="855.7" y2="855.7" stroke="#8aa2ee" stroke-width="1.6"/></svg><div style="right:10px;top:11px;font-size:12px;line-height:14px;color:#2d7bd8"><svg width="12" height="12" viewBox="0 0 12 12" style="vertical-align:-2px;margin-right:5px"><circle cx="6" cy="6" r="4.8" fill="none" stroke="#2d7bd8" stroke-width="1.3"/><path d="M6 3.4v2.8H4" fill="none" stroke="#2d7bd8" stroke-width="1.2"/></svg>最近1小时</div></div>
<div class="card" style="left:1444px;top:663px;width:442px;height:238px"><div class="ttl">存储集群带宽</div><svg style="left:0;top:0" width="442" height="238" viewBox="1444 663 442 238" font-family="Liberation Sans, sans-serif" font-size="12"><defs><linearGradient id="gp2" x1="0" y1="0" x2="0" y2="1"><stop offset="0" stop-color="#8a7fc4" stop-opacity="0.65"/><stop offset="1" stop-color="#8a7fc4" stop-opacity="0.04"/></linearGradient><linearGradient id="go2" x1="0" y1="0" x2="0" y2="1"><stop offset="0" stop-color="#c9875a" stop-opacity="0.55"/><stop offset="1" stop-color="#f79a50" stop-opacity="0.03"/></linearGradient></defs><line x1="1527" x2="1856" y1="856.5" y2="856.5" stroke="#a9afb9" stroke-width="1"/><text x="1519" y="859.8" text-anchor="end" fill="#636b75" font-size="12.8">0 MBps</text><line x1="1527" x2="1856" y1="836.5" y2="836.5" stroke="#a9afb9" stroke-width="1"/><text x="1519" y="839.8" text-anchor="end" fill="#636b75" font-size="12.8">10 MBps</text><line x1="1527" x2="1856" y1="816.5" y2="816.5" stroke="#a9afb9" stroke-width="1"/><text x="1519" y="819.8" text-anchor="end" fill="#636b75" font-size="12.8">20 MBps</text><line x1="1527" x2="1856" y1="796.5" y2="796.5" stroke="#a9afb9" stroke-width="1"/><text x="1519" y="799.8" text-anchor="end" fill="#636b75" font-size="12.8">30 MBps</text><line x1="1527" x2="1856" y1="776.5" y2="776.5" stroke="#a9afb9" stroke-width="1"/><text x="1519" y="779.8" text-anchor="end" fill="#636b75" font-size="12.8">40 MBps</text><line x1="1527" x2="1856" y1="756.5" y2="756.5" stroke="#a9afb9" stroke-width="1"/><text x="1519" y="759.8" text-anchor="end" fill="#636b75" font-size="12.8">50 MBps</text><line x1="1527" x2="1856" y1="736.5" y2="736.5" stroke="#a9afb9" stroke-width="1"/><text x="1519" y="739.8" text-anchor="end" fill="#636b75" font-size="12.8">60 MBps</text><line x1="1527" x2="1856" y1="716.5" y2="716.5" stroke="#a9afb9" stroke-width="1"/><text x="1519" y="719.8" text-anchor="end" fill="#636b75" font-size="12.8">70 MBps</text><text x="1528.2" y="873.8" text-anchor="middle" fill="#636b75">13:05</text><text x="1569.0" y="873.8" text-anchor="middle" fill="#636b75">13:12</text><text x="1609.7" y="873.8" text-anchor="middle" fill="#636b75">13:20</text><text x="1650.5" y="873.8" text-anchor="middle" fill="#636b75">13:27</text><text x="1691.2" y="873.8" text-anchor="middle" fill="#636b75">13:35</text><text x="1732.0" y="873.8" text-anchor="middle" fill="#636b75">13:42</text><text x="1772.8" y="873.8" text-anchor="middle" fill="#636b75">13:50</text><text x="1813.5" y="873.8" text-anchor="middle" fill="#636b75">13:57</text><text x="1854.3" y="873.8" text-anchor="middle" fill="#636b75">14:05</text><path d="M1527.5,855.7 L1527.5,855.7 L1786.5,855.7 L1789.7,811.5 L1792.1,811.5 L1794.7,757.2 L1798.0,757.4 L1808.4,757.6 L1811.2,738.3 L1814.0,738.3 L1816.4,721.6 L1819.1,721.6 L1822.1,737.9 L1824.7,738.5 L1828.0,752.9 L1830.3,752.9 L1833.3,835.2 L1835.5,835.2 L1838.9,821.6 L1840.8,821.8 L1844.0,854.9 L1848.7,854.7 L1854.6,853.9 L1854.6,855.7 Z" fill="url(#gp2)"/><path d="M1527.5,855.7 L1527.5,853.1 L1531.0,853.0 L1535.0,853.2 L1539.0,853.1 L1543.0,852.9 L1547.0,853.2 L1551.0,853.0 L1555.0,853.1 L1559.0,853.0 L1563.0,853.1 L1567.0,852.9 L1571.0,853.3 L1575.0,853.2 L1579.0,853.3 L1583.0,853.1 L1587.0,853.2 L1591.0,853.0 L1595.0,853.0 L1599.0,852.9 L1603.0,853.1 L1607.0,852.9 L1611.0,853.1 L1615.0,853.1 L1619.0,853.2 L1623.0,853.2 L1627.0,853.2 L1631.0,852.9 L1635.0,853.3 L1639.0,853.2 L1643.0,853.1 L1647.0,853.0 L1651.0,853.0 L1655.0,853.2 L1659.0,853.1 L1663.0,853.1 L1667.0,853.3 L1671.0,853.0 L1675.0,853.0 L1679.0,852.9 L1683.0,853.2 L1687.0,853.3 L1691.0,853.1 L1695.0,853.0 L1699.0,853.1 L1703.0,853.2 L1707.0,853.3 L1711.0,852.9 L1715.0,853.3 L1719.0,853.1 L1723.0,853.1 L1727.0,853.3 L1731.0,853.1 L1735.0,853.0 L1739.0,853.2 L1743.0,853.1 L1747.0,853.1 L1751.0,852.9 L1755.0,853.2 L1759.0,853.2 L1763.0,853.3 L1767.0,853.3 L1771.0,853.3 L1775.0,853.1 L1779.0,852.9 L1783.0,852.9 L1786.5,853.1 L1788.7,800.3 L1791.5,800.3 L1794.3,755.5 L1798.1,755.5 L1803.0,754.9 L1807.5,754.5 L1810.8,734.7 L1814.0,734.7 L1816.4,766.0 L1819.1,766.0 L1821.0,815.8 L1822.4,833.4 L1824.7,833.4 L1826.0,805.9 L1827.7,754.7 L1829.9,754.7 L1832.7,853.6 L1835.5,853.3 L1838.9,821.2 L1841.5,821.4 L1844.9,824.4 L1847.2,824.8 L1850.5,844.1 L1852.4,844.3 L1855.2,853.7 L1855.2,855.7 Z" fill="url(#go2)"/><polyline points="1527.5,855.7 1786.5,855.7 1789.7,811.5 1792.1,811.5 1794.7,757.2 1798.0,757.4 1808.4,757.6 1811.2,738.3 1814.0,738.3 1816.4,721.6 1819.1,721.6 1822.1,737.9 1824.7,738.5 1828.0,752.9 1830.3,752.9 1833.3,835.2 1835.5,835.2 1838.9,821.6 1840.8,821.8 1844.0,854.9 1848.7,854.7 1854.6,853.9" fill="none" stroke="#8a7fc4" stroke-width="1"/><polyline points="1527.5,853.1 1531.0,853.0 1535.0,853.2 1539.0,853.1 1543.0,852.9 1547.0,853.2 1551.0,853.0 1555.0,853.1 1559.0,853.0 1563.0,853.1 1567.0,852.9 1571.0,853.3 1575.0,853.2 1579.0,853.3 1583.0,853.1 1587.0,853.2 1591.0,853.0 1595.0,853.0 1599.0,852.9 1603.0,853.1 1607.0,852.9 1611.0,853.1 1615.0,853.1 1619.0,853.2 1623.0,853.2 1627.0,853.2 1631.0,852.9 1635.0,853.3 1639.0,853.2 1643.0,853.1 1647.0,853.0 1651.0,853.0 1655.0,853.2 1659.0,853.1 1663.0,853.1 1667.0,853.3 1671.0,853.0 1675.0,853.0 1679.0,852.9 1683.0,853.2 1687.0,853.3 1691.0,853.1 1695.0,853.0 1699.0,853.1 1703.0,853.2 1707.0,853.3 1711.0,852.9 1715.0,853.3 1719.0,853.1 1723.0,853.1 1727.0,853.3 1731.0,853.1 1735.0,853.0 1739.0,853.2 1743.0,853.1 1747.0,853.1 1751.0,852.9 1755.0,853.2 1759.0,853.2 1763.0,853.3 1767.0,853.3 1771.0,853.3 1775.0,853.1 1779.0,852.9 1783.0,852.9 1786.5,853.1 1788.7,800.3 1791.5,800.3 1794.3,755.5 1798.1,755.5 1803.0,754.9 1807.5,754.5 1810.8,734.7 1814.0,734.7 1816.4,766.0 1819.1,766.0 1821.0,815.8 1822.4,833.4 1824.7,833.4 1826.0,805.9 1827.7,754.7 1829.9,754.7 1832.7,853.6 1835.5,853.3 1838.9,821.2 1841.5,821.4 1844.9,824.4 1847.2,824.8 1850.5,844.1 1852.4,844.3 1855.2,853.7" fill="none" stroke="#f5a04d" stroke-width="1"/><line x1="1527.5" x2="1786.5" y1="855.7" y2="855.7" stroke="#8aa2ee" stroke-width="1.6"/></svg><div style="right:10px;top:11px;font-size:12px;line-height:14px;color:#2d7bd8"><svg width="12" height="12" viewBox="0 0 12 12" style="vertical-align:-2px;margin-right:5px"><circle cx="6" cy="6" r="4.8" fill="none" stroke="#2d7bd8" stroke-width="1.3"/><path d="M6 3.4v2.8H4" fill="none" stroke="#2d7bd8" stroke-width="1.2"/></svg>最近1小时</div></div>
</body></html>
